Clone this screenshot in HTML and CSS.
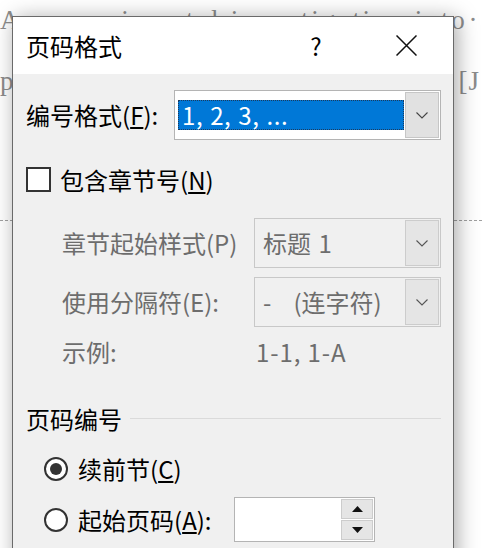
FILE: index.html
```html
<!DOCTYPE html>
<html lang="zh-CN">
<head>
<meta charset="utf-8">
<title>页码格式</title>
<link rel="stylesheet" href="styles.css">
</head>
<body>
<div class="doc">
  <div class="doc-line line1">An experimental investigation into<span class="mark">·</span></div>
  <div class="doc-line line2"><span>p</span><span class="ref">[J</span></div>
  <div class="dash"></div>

  <div class="dialog">
    <div class="titlebar">
      <div class="title">页码格式</div>
      <div class="help">?</div>
      <div class="close">
        <svg width="21" height="21" viewBox="0 0 21 21"><path d="M0.5 0.5 L20.5 20.5 M20.5 0.5 L0.5 20.5" stroke="#111" stroke-width="1.5" fill="none"/></svg>
      </div>
    </div>
    <div class="body">
      <div class="row1">
        <div class="label1">编号格式(<u>F</u>):</div>
        <div class="combo">
          <div class="field"><div class="sel">1, 2, 3, ...</div></div>
          <div class="dbtn"><svg width="12" height="7" viewBox="0 0 12 7"><polyline points="0.5,0.5 6,6 11.5,0.5" stroke="#444" stroke-width="1.1" fill="none"/></svg></div>
        </div>
      </div>

      <div class="checkrow">
        <div class="checkbox"></div>
        <div class="checklabel">包含章节号(<u>N</u>)</div>
      </div>

      <div class="subgrid">
        <div class="dlabel">章节起始样式(P)</div>
        <div class="combo disabled">
          <div class="dtext">标题 1</div>
          <div class="dbtn"><svg width="12" height="7" viewBox="0 0 12 7"><polyline points="0.5,0.5 6,6 11.5,0.5" stroke="#555" stroke-width="1.1" fill="none"/></svg></div>
        </div>
        <div class="dlabel">使用分隔符(E):</div>
        <div class="combo disabled">
          <div class="dtext">-&nbsp;&nbsp;&nbsp;(连字符)</div>
          <div class="dbtn"><svg width="12" height="7" viewBox="0 0 12 7"><polyline points="0.5,0.5 6,6 11.5,0.5" stroke="#555" stroke-width="1.1" fill="none"/></svg></div>
        </div>
        <div class="dlabel ex">示例:</div>
        <div class="exval ex">1-1, 1-A</div>
      </div>

      <div class="group">
        <div class="gtitle">页码编号</div>
        <div class="gline"></div>
      </div>

      <div class="radiorow r1">
        <div class="radio checked"><div class="dot"></div></div>
        <div class="rlabel">续前节(<u>C</u>)</div>
      </div>
      <div class="radiorow r2">
        <div class="radio"></div>
        <div class="rlabel wide">起始页码(<u>A</u>):</div>
        <div class="spin">
          <div class="spinfield"></div>
          <div class="spinbtns">
            <div class="sbtn"><svg width="11" height="6" viewBox="0 0 11 6"><polygon points="5.5,0 11,6 0,6" fill="#111"/></svg></div>
            <div class="sbtn"><svg width="11" height="6" viewBox="0 0 11 6"><polygon points="0,0 11,0 5.5,6" fill="#111"/></svg></div>
          </div>
        </div>
      </div>
    </div>
  </div>
</div>
</body>
</html>
```
FILE: styles.css
```css
html, body {
  margin: 0;
  padding: 0;
  width: 482px;
  height: 548px;
  overflow: hidden;
  background: #fff;
}

.doc {
  position: relative;
  width: 482px;
  height: 548px;
  overflow: hidden;
  background: #fff;
  font-family: "Liberation Serif", serif;
  color: #8c8c8c;
}

.doc-line {
  font-size: 27px;
  line-height: 30px;
  letter-spacing: 2.7px;
  white-space: nowrap;
}

.line1 {
  padding-top: 5px;
}

.mark {
  letter-spacing: 0;
  margin-left: 1px;
}

.line2 {
  display: flex;
  margin-top: 31px;
}

.ref {
  margin-left: auto;
  padding-right: 2px;
  letter-spacing: 1px;
}

.dash {
  margin-top: 124px;
  border-top: 1px dashed #a0a0a0;
}

.dialog {
  position: absolute;
  left: 12px;
  top: 16px;
  width: 442px;
  height: 570px;
  box-sizing: border-box;
  border: 1px solid #6a6a6a;
  background: #f0f0f0;
  box-shadow: 3px 2px 20px rgba(0, 0, 0, 0.35);
  font-family: "Noto Sans CJK SC", "Noto Sans", sans-serif;
  font-size: 24px;
  color: #000;
}

.titlebar {
  height: 57px;
  background: #fff;
  display: flex;
  align-items: center;
  padding-left: 13px;
  padding-right: 11px;
}

.title {
  flex: 1;
  line-height: 30px;
}

.help {
  width: 46px;
  text-align: center;
  line-height: 30px;
  margin-right: 31px;
}

.close {
  width: 72px;
  display: flex;
  justify-content: center;
  align-items: center;
}

.body {
  padding: 16px 12px 0 13px;
}

.row1 {
  display: flex;
  align-items: center;
  height: 50px;
}

.label1 {
  width: 148px;
  line-height: 30px;
}

.combo {
  box-sizing: border-box;
  height: 50px;
  border: 1px solid #b4b4b4;
  background: #fff;
  display: flex;
  align-items: center;
  padding: 1px;
}

.row1 .combo {
  width: 267px;
}

.field {
  flex: 1;
  padding: 0 1px 0 2px;
}

.sel {
  box-sizing: border-box;
  height: 30px;
  background: #0078d7;
  border: 1px dotted #1d3a5c;
  color: #fff;
  line-height: 28px;
  padding-left: 3px;
  font-size: 24px;
  letter-spacing: 0.6px;
  word-spacing: 1px;
}

.dbtn {
  box-sizing: border-box;
  width: 34px;
  height: 46px;
  background: #e1e1e1;
  border: 1px solid #c6c6c6;
  display: flex;
  align-items: center;
  justify-content: center;
}

.checkrow {
  display: flex;
  align-items: center;
  margin-top: 27px;
  height: 25px;
}

.checkbox {
  box-sizing: border-box;
  width: 25px;
  height: 25px;
  border: 2px solid #333;
  background: #fff;
}

.checklabel {
  margin-left: 9px;
  line-height: 30px;
}

.subgrid {
  display: grid;
  grid-template-columns: 192px 187px;
  grid-auto-rows: 50px;
  row-gap: 9px;
  align-items: center;
  margin-top: 26px;
  margin-left: 36px;
}

.dlabel {
  color: #6d6d6d;
  line-height: 30px;
}

.combo.disabled {
  background: #f0f0f0;
  border-color: #c8c8c8;
}

.dtext {
  flex: 1;
  color: #6d6d6d;
  padding-left: 7px;
  line-height: 30px;
  white-space: nowrap;
  word-spacing: 2px;
}

.combo.disabled .dbtn {
  background: #e5e5e5;
  border-color: #cccccc;
}

.ex {
  align-self: start;
  margin-top: 1px;
}

.exval {
  color: #6d6d6d;
  padding-left: 2px;
  line-height: 30px;
  letter-spacing: 0.9px;
}

.group {
  display: flex;
  align-items: center;
  margin-top: 18px;
  height: 30px;
}

.gtitle {
  line-height: 30px;
}

.gline {
  flex: 1;
  margin-left: 8px;
  border-top: 1px solid #dadada;
  margin-top: -2px;
}

.radiorow {
  display: flex;
  align-items: center;
  margin-left: 18px;
}

.r1 {
  margin-top: 20px;
  height: 30px;
}

.r2 {
  margin-top: 13px;
  height: 45px;
}

.radio {
  box-sizing: border-box;
  width: 24px;
  height: 24px;
  border: 2px solid #333;
  border-radius: 50%;
  background: #fff;
  display: flex;
  align-items: center;
  justify-content: center;
}

.dot {
  width: 12px;
  height: 12px;
  border-radius: 50%;
  background: #333;
}

.rlabel {
  margin-left: 10px;
  line-height: 30px;
}

.rlabel.wide {
  width: 156px;
}

.spin {
  box-sizing: border-box;
  width: 141px;
  height: 45px;
  border: 1px solid #b4b4b4;
  background: #fff;
  display: flex;
  padding: 1px;
}

.spinfield {
  flex: 1;
}

.spinbtns {
  width: 32px;
  display: flex;
  flex-direction: column;
  gap: 1px;
}

.sbtn {
  flex: 1;
  box-sizing: border-box;
  background: #e5e5e5;
  border: 1px solid #cccccc;
  display: flex;
  align-items: center;
  justify-content: center;
}
```
